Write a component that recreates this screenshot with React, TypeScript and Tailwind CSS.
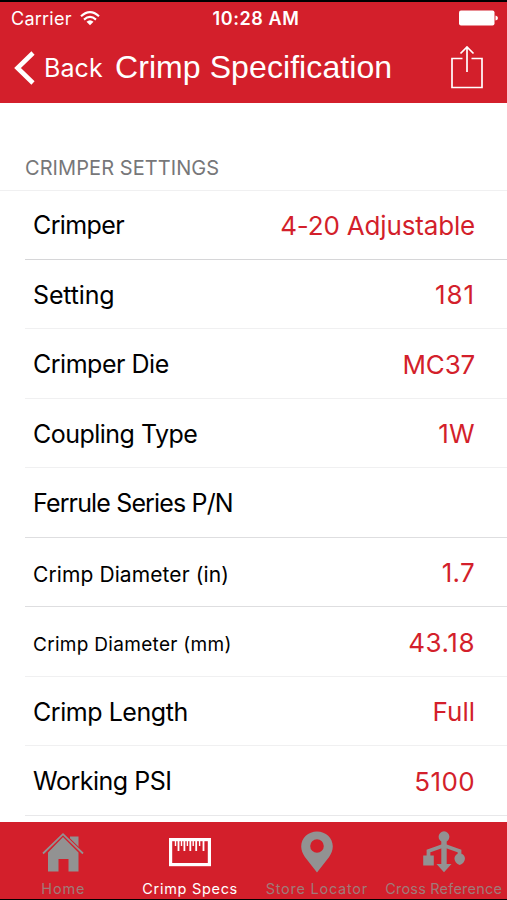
type Row = { label: string; value: string; labelClass: string; valueClass: string; line: string };

const rows: Row[] = [
  { label: "Crimper", value: "4-20 Adjustable", labelClass: "pt-px text-[25px] tracking-[-0.6px]", valueClass: "tracking-[-0.17px]", line: "border-[#d6d6d8]" },
  { label: "Setting", value: "181", labelClass: "pt-px text-[25px] tracking-[-0.15px]", valueClass: "tracking-[0.9px]", line: "border-[#f0f0f1]" },
  { label: "Crimper Die", value: "MC37", labelClass: "pt-px text-[25px] tracking-[-0.48px]", valueClass: "tracking-[-0.2px]", line: "border-[#f0f0f1]" },
  { label: "Coupling Type", value: "1W", labelClass: "pt-px text-[25px] tracking-[-0.52px]", valueClass: "tracking-[0.3px]", line: "border-[#f0f0f1]" },
  { label: "Ferrule Series P/N", value: "", labelClass: "pt-px text-[25px] tracking-[-0.85px]", valueClass: "", line: "border-[#dedee0]" },
  { label: "Crimp Diameter (in)", value: "1.7", labelClass: "pt-[3px] text-[21px] tracking-[0.1px]", valueClass: "tracking-[0.3px]", line: "border-[#dedee0]" },
  { label: "Crimp Diameter (mm)", value: "43.18", labelClass: "pt-[5px] text-[19px] tracking-[0.3px]", valueClass: "tracking-[0.5px]", line: "border-[#f0f0f1]" },
  { label: "Crimp Length", value: "Full", labelClass: "pt-px text-[25px] tracking-[-0.45px]", valueClass: "tracking-[0px]", line: "border-[#f0f0f1]" },
  { label: "Working PSI", value: "5100", labelClass: "pt-px text-[25px] tracking-[-0.48px]", valueClass: "tracking-[0.4px]", line: "border-[#e8e8ea]" },
];

function WifiIcon() {
  return (
    <svg className="ml-[8px] h-[15px] w-5" viewBox="0 0 20 15" fill="none" stroke="white" strokeWidth="2.1">
      <path d="M1 5.3Q10-3 19 5.3M4 8.6Q10 3.2 16 8.6" />
      <path d="M6.5 10.7Q10 7.6 13.5 10.7L10 14.2Z" fill="white" stroke="none" />
    </svg>
  );
}

function HomeIcon() {
  return (
    <svg className="h-[42px] w-[44px]" viewBox="0 0 44 42">
      <path d="M29 5.5h8.5v13l-8.5-8z" fill="#929292" />
      <path d="M22 6 37.5 21.5V40.5H27.5V28H17.5V40.5H7V21.5Z" fill="#929292" />
      <path d="M2 22.5 22 3 42 22.5" fill="none" stroke="#d31f2b" strokeWidth="3.6" />
      <path d="M2 22.5 22 3.2 42 22.5" fill="none" stroke="#929292" strokeWidth="1.8" />
    </svg>
  );
}

function RulerIcon() {
  return (
    <svg className="h-[42px] w-[42px]" viewBox="0 0 42 42" fill="none" stroke="white">
      <rect x="1.6" y="8.6" width="38.8" height="25" strokeWidth="3.2" />
      <path d="M9.5 9v11M15.4 9v11M21.3 9v11M27.2 9v11M34.5 9v11" strokeWidth="1.8" />
      <path d="M6.5 9v6M12.5 9v6M18.4 9v6M24.2 9v6M30.6 9v6" strokeWidth="1.4" />
    </svg>
  );
}

function PinIcon() {
  return (
    <svg className="h-[42px] w-8" viewBox="0 0 32 42" fill="#929292">
      <path fillRule="evenodd" d="M16 .5C7.2.5.2 7 .2 15.5c0 4 1.6 7.2 3.7 10.4L16 41.5l12.1-15.6c2.1-3.2 3.7-6.4 3.7-10.4C31.8 7 24.8.5 16 .5Zm0 7.7a6.8 6.8 0 1 1 0 13.6 6.8 6.8 0 0 1 0-13.6Z" />
    </svg>
  );
}

function BranchIcon() {
  return (
    <svg className="h-[42px] w-[42px]" viewBox="0 0 42 42" fill="#929292">
      <circle cx="21" cy="5.7" r="5.4" />
      <path d="M18.3 8h5.4v25H28.5l-7.5 8.3-7.5-8.3h4.8z" />
      <path d="M21 14.5 5.5 20v7M21 14.5l15.5 5.5v7" fill="none" stroke="#929292" strokeWidth="3.8" />
      <path d="M.2 24.5h10.6v10H.2z" />
      <path d="M36.7 22.5c3 0 5.2 2.2 5.2 5 0 2.6-2.2 5.6-5.2 6.5-3-.9-5.2-3.9-5.2-6.5 0-2.8 2.2-5 5.2-5z" />
    </svg>
  );
}

const tabs = [
  { label: "Home", icon: <HomeIcon />, cls: "text-[#a07a78] tracking-[0.9px]" },
  { label: "Crimp Specs", icon: <RulerIcon />, cls: "text-white tracking-[0.7px]" },
  { label: "Store Locator", icon: <PinIcon />, cls: "text-[#a07a78] tracking-[0.75px]" },
  { label: "Cross Reference", icon: <BranchIcon />, cls: "text-[#a07a78] tracking-[0.2px]" },
];

export default function App() {
  return (
    <div className="flex h-[900px] w-[507px] flex-col overflow-hidden border-t-2 border-black bg-white font-['Inter',sans-serif] text-black">
      <header className="h-[101px] shrink-0 bg-[#d31f2b] text-white">
        <div className="grid h-[33px] grid-cols-3 items-center pr-[9px] pl-[11px]">
          <div className="flex items-center text-[18px] tracking-[0.25px]"><span>Carrier</span><WifiIcon /></div>
          <div className="pl-[3px] text-center text-[18px] font-semibold tracking-[0.6px] whitespace-nowrap">10:28 AM</div>
          <svg className="mb-[2px] h-4 w-[39px] justify-self-end" viewBox="0 0 39 16" fill="white">
            <rect y=".5" width="35.5" height="15" rx="2" /><path d="M36.5 5.5q2.5.5 2.5 2.5t-2.5 2.5z" />
          </svg>
        </div>
        <div className="flex h-[66px] items-center pr-[24px] pl-[14px]">
          <svg className="h-[34px] w-[21px]" viewBox="0 0 21 34" fill="none" stroke="white" strokeWidth="4.6">
            <path d="M19 2 3.5 17 19 32" />
          </svg>
          <span className="ml-[9px] w-[71px] pt-[2px] text-[25px] tracking-[0.1px] whitespace-nowrap">Back</span>
          <h1 className="pb-[2px] font-['Liberation_Sans',sans-serif] text-[32px] tracking-[0.08px] whitespace-nowrap">Crimp Specification</h1>
          <svg className="mb-[3px] ml-auto h-[44px] w-[32px]" viewBox="0 0 32 44" fill="none" stroke="white" strokeWidth="1.7">
            <path d="M11.5 13.5H1v29h30v-29H20.5M16 27V2M9.5 8.5 16 2l6.5 6.5" />
          </svg>
        </div>
      </header>
      <main className="h-[719px] shrink-0">
        <h2 className="h-[87px] pt-[50px] pl-[25px] text-[20px] leading-[30px] tracking-[0.07px] text-[#777779]">CRIMPER SETTINGS</h2>
        <div className="h-px bg-[#f0f0f1]" />
        <ul className="-mt-[0.6px] pl-[25px]">
          {rows.map((r) => (
            <li key={r.label} className={`flex h-[69.5px] items-center justify-between border-b pt-[1.5px] pr-8 pl-2 ${r.line}`}>
              <span className={`whitespace-nowrap ${r.labelClass}`}>{r.label}</span>
              <span className={`text-[26px] whitespace-nowrap text-[#d31f2b] ${r.valueClass}`}>{r.value}</span>
            </li>
          ))}
        </ul>
      </main>
      <nav className="grid h-[77px] shrink-0 grid-cols-4 bg-[#d31f2b] pt-[9px]">
        {tabs.map((t) => (
          <div key={t.label} className="flex flex-col items-center">
            {t.icon}
            <span className={`mt-[6px] text-[14.5px] leading-5 whitespace-nowrap ${t.cls}`}>{t.label}</span>
          </div>
        ))}
      </nav>
      <div className="h-px shrink-0 bg-black" />
    </div>
  );
}
